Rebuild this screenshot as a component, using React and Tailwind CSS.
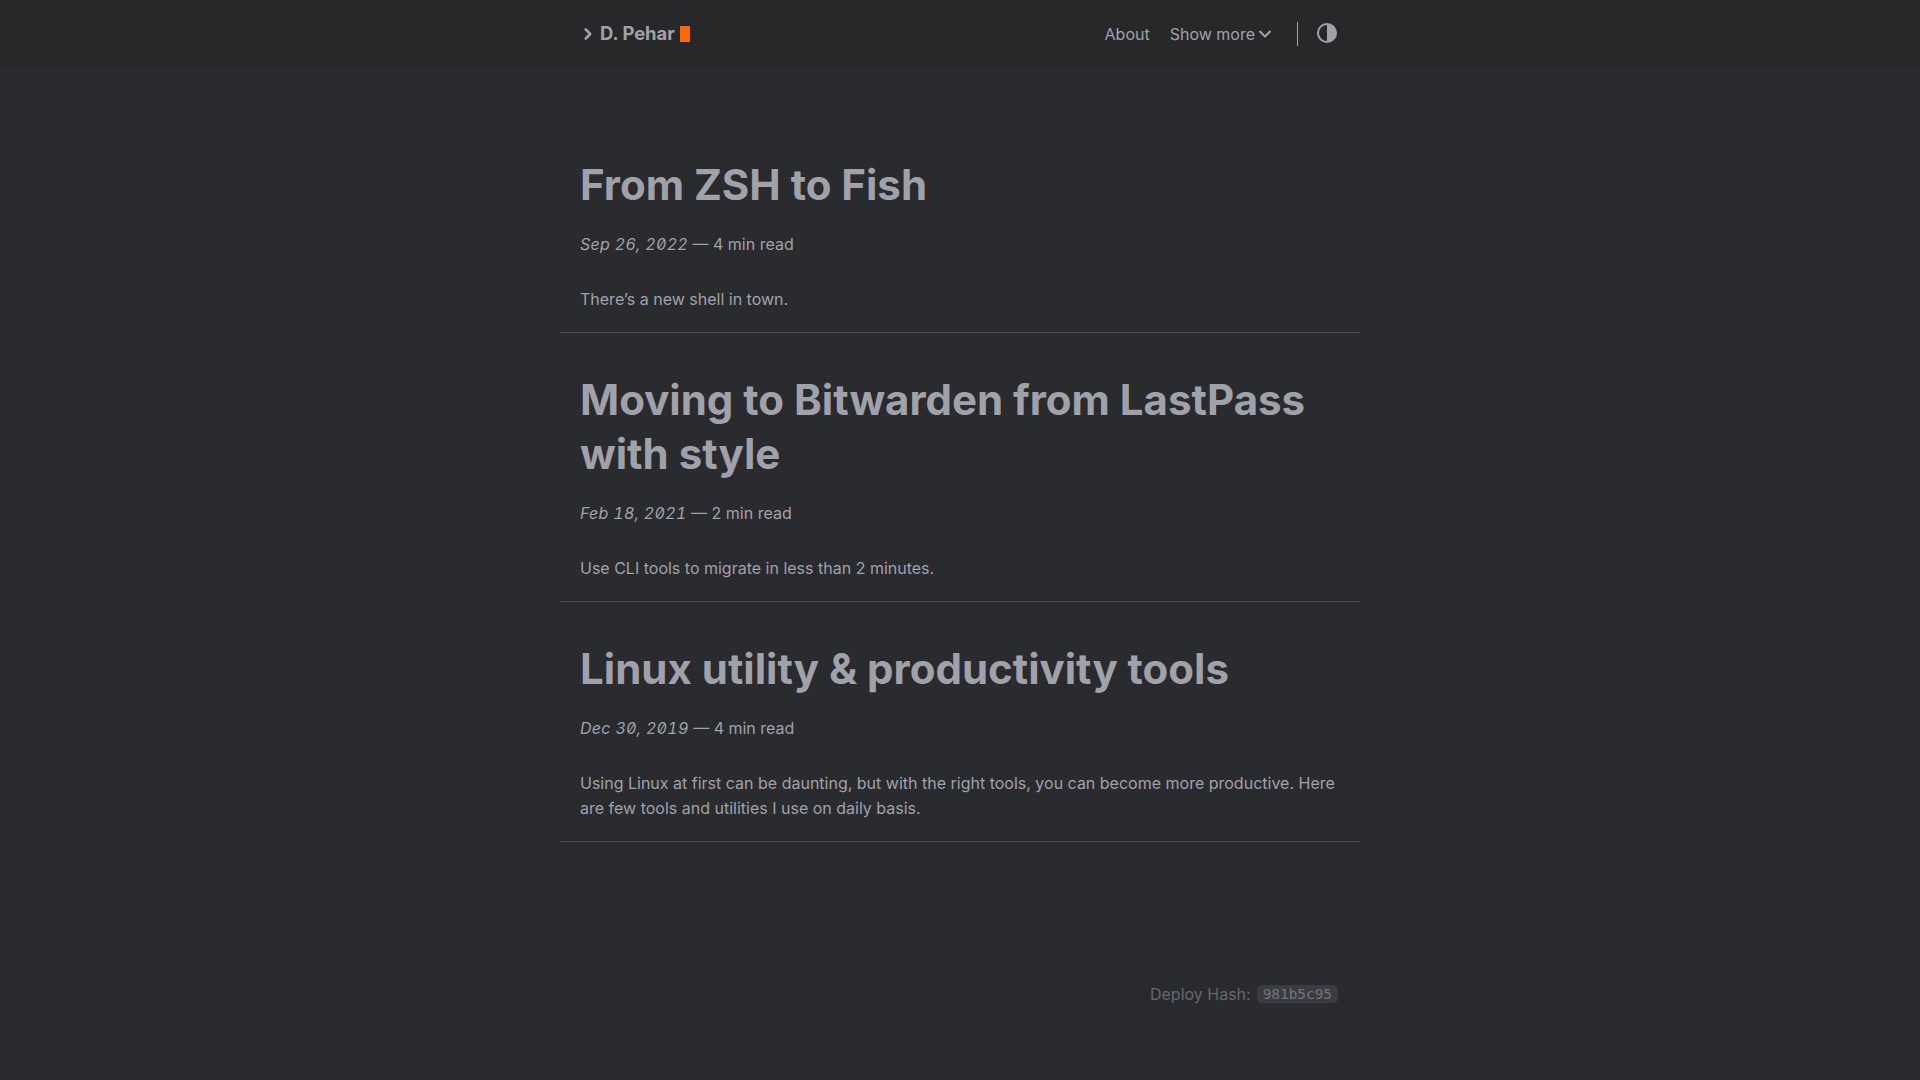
import { ChevronDown, ChevronRight } from 'lucide-react'

const posts = [
    {
        title: <>From ZSH to Fish</>,
        date: 'Sep 26, 2022',
        read: '4 min read',
        text: 'There’s a new shell in town.',
    },
    {
        title: <>Moving to Bitwarden from LastPass with style</>,
        date: 'Feb 18, 2021',
        read: '2 min read',
        text: 'Use CLI tools to migrate in less than 2 minutes.',
    },
    {
        title: <>Linux utility &amp; productivity tools</>,
        date: 'Dec 30, 2019',
        read: '4 min read',
        text: 'Using Linux at first can be daunting, but with the right tools, you can become more productive. Here are few tools and utilities I use on daily basis.',
    },
]

function Post({ post }) {
    return (
        <article className="border-b border-[#4c4d52] px-5 pt-[40px] pb-[20px]">
            <h1 className="text-[42px] leading-[54px] font-bold text-[#a1a1aa]">{post.title}</h1>
            <p className="mt-[20px] text-[16px] leading-[25px] text-[#a1a1aa]">
                <i className="tracking-[0.3px] [font-feature-settings:'zero','tnum']">{post.date}</i> — {post.read}
            </p>
            <p className="mt-[30px] text-[16px] leading-[25px] text-[#a1a1aa]">{post.text}</p>
        </article>
    )
}

export default function App() {
    return (
        <div className="min-h-screen bg-[#2a2b2f] font-['Inter',sans-serif] flex flex-col">
            <header className="h-[68px] bg-[#27282a]">
                <nav className="w-[800px] mx-auto h-full px-5 flex items-center justify-between">
                    <a className="flex items-center text-[18.4px] font-bold text-[#a1a1aa]">
                        <ChevronRight className="h-[18px] w-[18px] mr-[3px] -ml-[1px]" strokeWidth={3.5} />
                        D. Pehar
                        <span className="ml-[5px] w-[10px] h-[16px] bg-[#ff6a00]" />
                    </a>
                    <div className="flex items-center text-[16px] text-[#a1a1aa]">
                        <span>About</span>
                        <span className="ml-5 flex items-center">
                            Show more
                            <ChevronDown className="h-5 w-5" strokeWidth={2.5} />
                        </span>
                        <span className="ml-[22px] w-px h-6 bg-[#a1a1aa]" />
                        <svg className="ml-[19px] mr-[3px] mb-[2px] h-5 w-5" viewBox="0 0 20 20">
                            <circle cx="10" cy="10" r="9" fill="none" stroke="#a1a1aa" strokeWidth="2" />
                            <path d="M10 1a9 9 0 0 1 0 18z" fill="#a1a1aa" />
                        </svg>
                    </div>
                </nav>
            </header>
            <main className="w-[800px] mx-auto pt-[50px]">
                {posts.map((post) => (
                    <Post key={post.date} post={post} />
                ))}
            </main>
            <footer className="w-[800px] mx-auto mt-[140px] px-[22px] flex justify-end items-center text-[16px] text-[#66676c]">
                Deploy Hash:
                <code className="ml-[6px] px-[6px] rounded-[5px] bg-[#3b3c41] text-[#74757a] text-[14.4px] leading-[18px] font-['DejaVu_Sans_Mono',monospace]">981b5c95</code>
            </footer>
        </div>
    )
}
